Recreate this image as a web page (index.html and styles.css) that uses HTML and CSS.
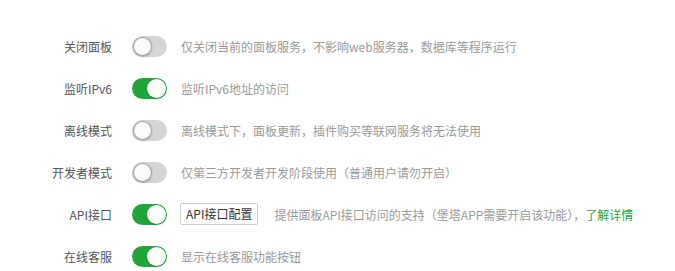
FILE: index.html
```html
<!DOCTYPE html>
<html lang="zh-CN">
<head>
<meta charset="utf-8">
<link rel="stylesheet" href="styles.css">
</head>
<body>
<div class="settings">
  <div class="row">
    <span class="label">关闭面板</span>
    <span class="switch"><span class="knob"></span></span>
    <span class="desc">仅关闭当前的面板服务，不影响web服务器，数据库等程序运行</span>
  </div>
  <div class="row">
    <span class="label">监听IPv6</span>
    <span class="switch on"><span class="knob"></span></span>
    <span class="desc">监听IPv6地址的访问</span>
  </div>
  <div class="row">
    <span class="label">离线模式</span>
    <span class="switch"><span class="knob"></span></span>
    <span class="desc">离线模式下，面板更新，插件购买等联网服务将无法使用</span>
  </div>
  <div class="row">
    <span class="label">开发者模式</span>
    <span class="switch"><span class="knob"></span></span>
    <span class="desc">仅第三方开发者开发阶段使用（普通用户请勿开启）</span>
  </div>
  <div class="row">
    <span class="label">API接口</span>
    <span class="switch on"><span class="knob"></span></span>
    <button class="btn">API接口配置</button>
    <span class="desc">提供面板API接口访问的支持（堡塔APP需要开启该功能），<a class="link">了解详情</a></span>
  </div>
  <div class="row">
    <span class="label">在线客服</span>
    <span class="switch on"><span class="knob"></span></span>
    <span class="desc">显示在线客服功能按钮</span>
  </div>
</div>
</body>
</html>
```
FILE: styles.css
```css
html, body {
  margin: 0;
  padding: 0;
  background: #fff;
}
body {
  font-family: "Noto Sans CJK SC", "Liberation Sans", sans-serif;
  font-size: 12px;
}
.settings {
  padding-top: 25px;
}
.row {
  display: flex;
  align-items: center;
  height: 42px;
}
.label {
  width: 112px;
  text-align: right;
  color: #555;
  flex-shrink: 0;
}
.switch {
  box-sizing: border-box;
  width: 35px;
  height: 21px;
  margin-left: 20px;
  border-radius: 11px;
  background: #d5d5d5;
  display: flex;
  align-items: center;
  padding: 0 1px;
  flex-shrink: 0;
}
.switch .knob {
  width: 19px;
  height: 19px;
  border-radius: 50%;
  background: #fbfbfb;
  box-shadow: 0 0 0 1px #9a9a9a inset, 0 1px 2px rgba(0,0,0,0.25);
}
.switch.on {
  background: #20a53a;
  justify-content: flex-end;
}
.switch.on .knob {
  box-shadow: 0 1px 2px rgba(0,0,0,0.2);
}
.desc {
  margin-left: 14px;
  color: #999;
  white-space: nowrap;
}
.btn {
  margin-left: 13px;
  height: 22px;
  padding: 0 5px;
  border: 1px solid #ccc;
  border-radius: 2px;
  background: #fff;
  color: #333;
  font-family: inherit;
  font-size: 12px;
  line-height: 20px;
}
.btn + .desc {
  margin-left: 16px;
}
.link {
  color: #20a53a;
}
```
